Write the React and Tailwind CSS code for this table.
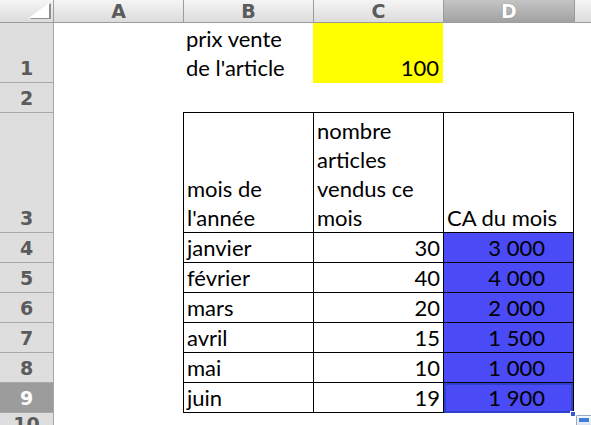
import React from "react";

const cellFont = { fontFamily: "Lato, 'Open Sans', sans-serif" };

const months = [
  ["janvier", "30", "3 000"],
  ["février", "40", "4 000"],
  ["mars", "20", "2 000"],
  ["avril", "15", "1 500"],
  ["mai", "10", "1 000"],
  ["juin", "19", "1 900"],
];

function ColHead({ label, selected, className = "" }) {
  return (
    <div
      className={`flex h-full items-center justify-center border-l border-[#9c9c9c] text-[19px] font-bold ${
        selected
          ? "bg-gradient-to-b from-[#c4c4c4] to-[#a2a2a2] text-white [text-shadow:0_0_1px_#666]"
          : "bg-gradient-to-b from-[#f5f5f5] to-[#dcdcdc] text-[#5b5b5b]"
      } ${className}`}
    >
      {label}
    </div>
  );
}

function RowHead({ n, h, selected }) {
  return (
    <div
      className={`flex w-[54px] shrink-0 items-end justify-center border-b border-r border-[#a8a8a8] pb-[4px] text-[19px] font-bold leading-none ${
        selected ? "bg-[#9c9c9c] text-white" : "bg-[#dedede] text-[#5b5b5b]"
      }`}
      style={{ height: h }}
    >
      {n}
    </div>
  );
}

function Cell({ w, children, className = "", align = "left" }) {
  return (
    <div
      className={`flex h-full shrink-0 flex-col justify-end text-[22px] leading-[29px] text-black ${
        align === "right" ? "items-end pr-[3px]" : "items-start pl-[3px]"
      } ${className}`}
      style={{ width: w, ...cellFont }}
    >
      {children}
    </div>
  );
}

function Row({ n, h, selected, children }) {
  return (
    <div className="flex" style={{ height: h }}>
      <RowHead n={n} h={h} selected={selected} />
      {children}
    </div>
  );
}

export default function App() {
  return (
    <div
      className="h-[425px] w-[591px] overflow-hidden bg-white"
      style={{ fontFamily: "'DejaVu Sans', Verdana, sans-serif" }}
    >
      {/* column headers */}
      <div className="flex h-[23px] border-b border-[#9c9c9c]">
        <div className="relative h-full w-[54px] shrink-0 border-r border-[#9c9c9c] bg-gradient-to-b from-[#f5f5f5] to-[#dcdcdc]">
          <svg width="54" height="22" className="absolute left-0 top-0">
            <polygon points="30,19 51,19 51,3" fill="#8e8e8e" />
            <polygon points="29,18 49,18 49,3" fill="#ffffff" />
          </svg>
        </div>
        <div className="flex h-full w-[129px] shrink-0 items-center justify-center bg-gradient-to-b from-[#f5f5f5] to-[#dcdcdc] text-[19px] font-bold text-[#5b5b5b]">
          A
        </div>
        <ColHead label="B" className="w-[130px] shrink-0" />
        <ColHead label="C" className="w-[130px] shrink-0" />
        <ColHead label="D" selected className="w-[131px] shrink-0" />
        <ColHead label="" className="flex-1" />
      </div>

      {/* row 1 */}
      <Row n={1} h={60}>
        <Cell w={129} />
        <Cell w={130} className="pb-[1px]">
          <span>prix vente</span>
          <span>de l'article</span>
        </Cell>
        <Cell w={130} align="right" className="bg-[#ffff00] pb-[1px] pr-[4px]">
          100
        </Cell>
      </Row>

      {/* row 2 */}
      <Row n={2} h={30}>
        <Cell w={129} />
        <div className="h-full w-[391px] shrink-0 border-b border-black" />
      </Row>

      {/* row 3 header of table */}
      <Row n={3} h={120}>
        <Cell w={129} />
        <Cell w={130} className="border-b border-l border-black">
          <span>mois de</span>
          <span>l'année</span>
        </Cell>
        <Cell w={130} className="border-b border-l border-black">
          <span>nombre</span>
          <span>articles</span>
          <span>vendus ce</span>
          <span>mois</span>
        </Cell>
        <Cell w={131} className="border-b border-l border-r border-black">
          <span>CA du mois</span>
        </Cell>
      </Row>

      {months.map(([m, qty, ca], i) => {
        const last = i === months.length - 1;
        return (
          <Row key={m} n={i + 4} h={30} selected={last}>
            <Cell w={129} />
            <Cell w={130} className="border-b border-l border-black">
              {m}
            </Cell>
            <Cell w={130} align="right" className="border-b border-l border-black">
              {qty}
            </Cell>
            <div className="relative h-full w-[131px] shrink-0">
              <Cell
                w={131}
                align="right"
                className="border-b border-l border-r border-black bg-[#4a4af6] !pr-[28px]"
              >
                {ca}
              </Cell>
              {last && (
                <>
                  <div className="absolute inset-x-[1px] bottom-0 top-0 border-2 border-[#2c42cf]" />
                  <div className="absolute -bottom-[4px] right-[-2px] h-[6px] w-[6px] border border-white bg-[#3558d8]" />
                </>
              )}
            </div>
          </Row>
        );
      })}

      {/* row 10 (partial) */}
      <div className="relative flex h-[12px]">
        <div className="flex h-[12px] w-[54px] shrink-0 items-start justify-center overflow-hidden border-r border-[#a8a8a8] bg-[#dedede] pt-[2px] text-[19px] font-bold leading-none text-[#5b5b5b]">
          10
        </div>
        <div className="absolute left-[576px] top-[2px] h-[12px] w-[16px] rounded-[1px] border border-[#9aa8c0] bg-gradient-to-b from-[#f4f7fc] to-[#dbe3f0] p-[2px]">
          <div className="h-[4px] w-full bg-[#3f7fd6]" />
        </div>
      </div>
    </div>
  );
}
